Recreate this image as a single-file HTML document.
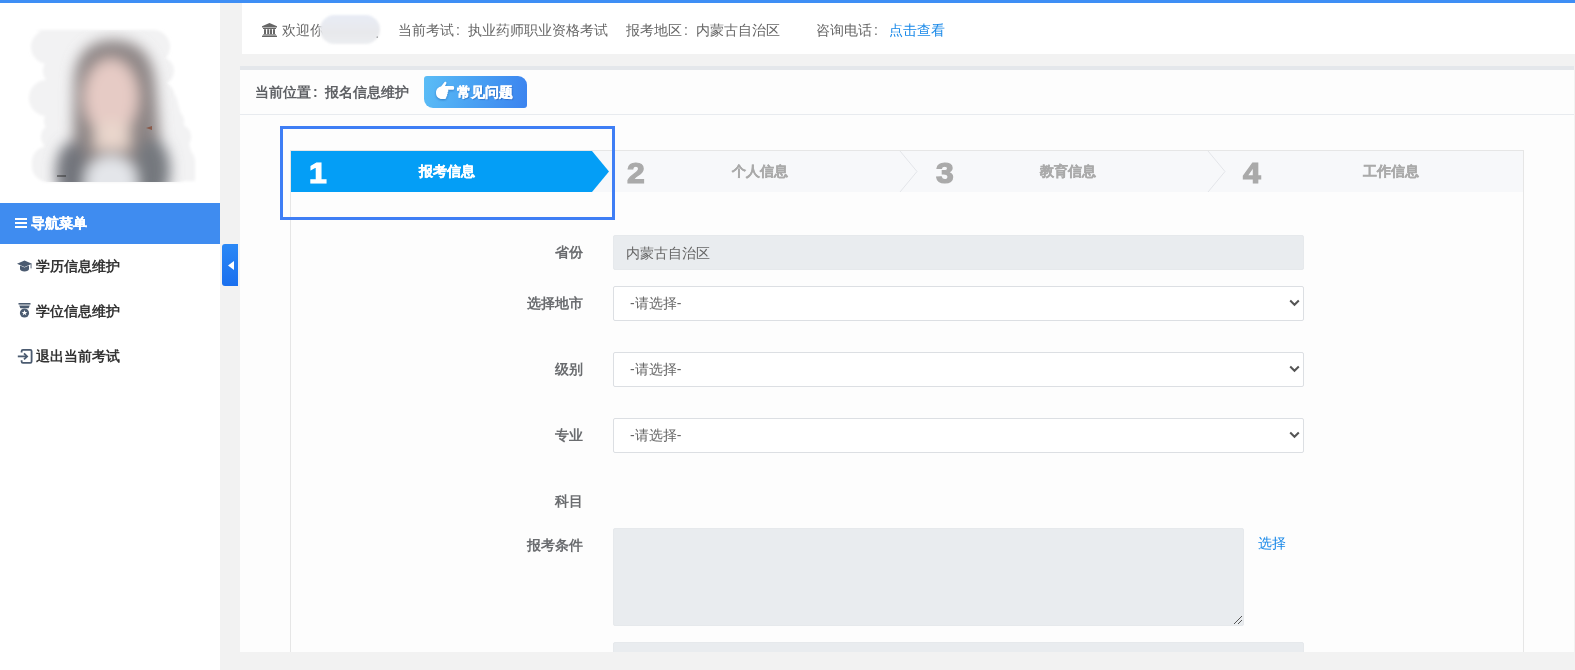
<!DOCTYPE html>
<html><head><meta charset="utf-8">
<style>
*{box-sizing:border-box;margin:0;padding:0}
html,body{width:1575px;height:670px;overflow:hidden;background:#f2f2f2;font-family:"Liberation Sans",sans-serif;font-size:14px;color:#666}
.abs{position:absolute}
#topbar{left:0;top:0;width:1575px;height:3px;background:#3e8ef5}
#side{left:0;top:3px;width:220px;height:667px;background:#fff}
#nav{left:0;top:203px;width:220px;height:41px;background:#3f8cf0;color:#fff;font-weight:bold}
.nt{position:absolute;white-space:nowrap;line-height:20px;will-change:transform}
.mi{position:absolute;will-change:transform;left:36px;color:#333;font-weight:bold;white-space:nowrap;line-height:20px}
#tab{left:222px;top:244px;width:16px;height:42px;border-radius:3px 0 0 3px;background:linear-gradient(180deg,#2a88f6,#1a6fee)}
#hdr{left:242px;top:3px;width:1333px;height:51px;background:#fff}
#panel{left:240px;top:66px;width:1334px;height:586px;background:#fdfdfd;border-top:4px solid #e4e7eb}
#crumb{left:240px;top:114px;width:1334px;height:1px;background:#e8ebef}
#outline{left:280px;top:126px;width:335px;height:94px;border:3px solid #3f7ef5}
#steps{left:290px;top:150px;width:1234px;height:520px;border:1px solid #e6e6e6;border-bottom:none}
#stepbar{left:291px;top:151px;width:1232px;height:41px;background:#f7f8fa}
.num{position:absolute;font-family:"Liberation Sans",sans-serif;font-weight:bold;font-size:29px;line-height:30px;color:#aaa;-webkit-text-stroke:1.2px currentColor;transform:scaleX(1.1);transform-origin:0 0}
.slbl{position:absolute;will-change:transform;font-weight:bold;-webkit-text-stroke:0.3px currentColor;color:#aaa;white-space:nowrap;line-height:20px}
.lbl{position:absolute;will-change:transform;font-weight:bold;color:#6a6c6f;white-space:nowrap;line-height:20px;text-align:right;width:120px;left:463px}
.inp{position:absolute;left:613px;width:691px;height:35px;border:1px solid #dcdfe3;border-radius:2px;background:#fff}
.dis{background:#e9ecef;border-color:#e6e9ec}
.cl{display:inline-block;width:14px;text-indent:2px}
.itxt{position:absolute;will-change:transform;white-space:nowrap;line-height:20px;color:#666}
</style></head><body>
<div id="topbar" class="abs"></div>
<div id="side" class="abs"></div>
<svg class="abs" style="left:0;top:0" width="220" height="200" viewBox="0 0 220 200">
  <defs>
    <filter id="bb" x="-20%" y="-20%" width="140%" height="140%"><feGaussianBlur stdDeviation="1.6"/></filter>
    <filter id="bf" x="-50%" y="-50%" width="200%" height="200%"><feGaussianBlur stdDeviation="7"/></filter>
    <filter id="bs" x="-50%" y="-50%" width="200%" height="200%"><feGaussianBlur stdDeviation="0.6"/></filter>
    <clipPath id="cp">
      <rect x="31" y="30" width="139" height="34" rx="17"/>
      <rect x="43" y="57" width="131" height="28" rx="14"/>
      <rect x="29" y="80" width="146" height="36" rx="18"/>
      <rect x="44" y="110" width="140" height="22" rx="11"/>
      <rect x="41" y="124" width="150" height="26" rx="13"/>
      <rect x="32" y="146" width="163" height="36" rx="16"/>
      <polygon points="150,92 176,96 195,166 195,181 150,181"/>
      <polygon points="35,30 121,30 163,40 120,50"/>
    </clipPath>
  </defs>
  <g filter="url(#bb)" fill="#f2f2f3">
      <rect x="31" y="30" width="139" height="34" rx="17"/>
      <rect x="43" y="57" width="131" height="28" rx="14"/>
      <rect x="29" y="80" width="146" height="36" rx="18"/>
      <rect x="44" y="110" width="140" height="22" rx="11"/>
      <rect x="41" y="124" width="150" height="26" rx="13"/>
      <rect x="32" y="146" width="163" height="36" rx="16"/>
      <polygon points="150,92 176,96 195,166 195,181 150,181"/>
      <polygon points="35,30 121,30 163,40 120,50"/>
  </g>
  <g clip-path="url(#cp)">
    <g filter="url(#bf)">
      <path d="M72,190 L74,85 C74,50 93,40 113,40 C135,40 154,50 156,88 L164,190 Z" fill="#8e8686"/>
      <ellipse cx="111" cy="97" rx="27" ry="38" fill="#e6cbc5"/>
      <rect x="95" y="122" width="34" height="28" fill="#e9d6cc"/>
      <ellipse cx="72" cy="172" rx="16" ry="30" fill="#72757c"/>
      <ellipse cx="152" cy="170" rx="18" ry="32" fill="#75787e"/>
      <ellipse cx="111" cy="180" rx="26" ry="24" fill="#e4e6ea"/>
    </g>
  </g>
  <polygon points="146,128 152,126 152,130" fill="#8a5a4a"/>
  <rect x="57" y="175" width="9" height="2" fill="#333" opacity=".5" filter="url(#bs)"/>
</svg>
<div id="nav" class="abs">
  <div class="abs" style="left:15px;top:15px;width:12px;height:2px;background:#fff"></div>
  <div class="abs" style="left:15px;top:19px;width:12px;height:2px;background:#fff"></div>
  <div class="abs" style="left:15px;top:23px;width:12px;height:2px;background:#fff"></div>
  <div class="nt" style="left:31px;top:10px;-webkit-text-stroke:0.3px #fff">导航菜单</div>
</div>
<svg class="abs" style="left:17px;top:260px" width="15" height="12" viewBox="0 0 15 12">
  <polygon points="7.5,0.5 15,3.8 7.5,7 0,3.8" fill="#4b5b70"/>
  <path d="M3 5.6 L3 9 C3 10.6 5 11.5 7.5 11.5 C10 11.5 12 10.6 12 9 L12 5.6 L7.5 7.6 Z" fill="#4b5b70"/>
  <rect x="13.6" y="4" width="0.9" height="4.4" fill="#4b5b70"/>
</svg>
<svg class="abs" style="left:18px;top:303px" width="13" height="15" viewBox="0 0 13 15">
  <rect x="0.5" y="0" width="12" height="1.6" fill="#4b5b70"/>
  <path d="M1.2 2.4 L11.8 2.4 L10.6 5.2 L2.4 5.2 Z" fill="#4b5b70"/>
  <circle cx="6.5" cy="10" r="4.6" fill="#4b5b70"/>
  <polygon points="6.5,7 7.3,9 9.3,9 7.7,10.2 8.3,12.2 6.5,11 4.7,12.2 5.3,10.2 3.7,9 5.7,9" fill="#fff"/>
</svg>
<svg class="abs" style="left:17px;top:349px" width="16" height="15" viewBox="0 0 16 15">
  <path d="M4.6 3.6 L4.6 2.2 Q4.6 0.9 5.9 0.9 L13.3 0.9 Q14.6 0.9 14.6 2.2 L14.6 12.6 Q14.6 13.9 13.3 13.9 L5.9 13.9 Q4.6 13.9 4.6 12.6 L4.6 11.2" fill="none" stroke="#4b5b70" stroke-width="1.8"/>
  <path d="M0.8 7.4 L9.8 7.4" stroke="#4b5b70" stroke-width="1.8"/>
  <path d="M7 4.4 L10.1 7.4 L7 10.4" fill="none" stroke="#4b5b70" stroke-width="1.8"/>
</svg>
<div class="mi" style="top:256px">学历信息维护</div>
<div class="mi" style="top:301px">学位信息维护</div>
<div class="mi" style="top:346px">退出当前考试</div>
<div id="tab" class="abs"><svg class="abs" style="left:6px;top:17px" width="7" height="9" viewBox="0 0 7 9"><polygon points="0,4.5 6,0 6,9" fill="#fff"/></svg></div>

<div id="hdr" class="abs">
  <svg class="abs" style="left:20px;top:20px" width="15" height="14" viewBox="0 0 15 14">
    <polygon points="7.5,0 15,3.2 15,4.6 0,4.6 0,3.2" fill="#666"/>
    <rect x="1" y="5" width="13" height="1" fill="#666"/>
    <rect x="2" y="6.2" width="2" height="5" fill="#666"/>
    <rect x="5.2" y="6.2" width="2" height="5" fill="#666"/>
    <rect x="8" y="6.2" width="2" height="5" fill="#666"/>
    <rect x="11" y="6.2" width="2" height="5" fill="#666"/>
    <rect x="1" y="11.4" width="13" height="1" fill="#666"/>
    <rect x="0" y="12.6" width="15" height="1.4" fill="#666"/>
  </svg>
  <div class="nt" style="left:40px;top:17px">欢迎你</div>
  <div class="abs" style="left:134px;top:33px;width:2px;height:2px;background:#666"></div>
  <div class="abs" style="left:78px;top:12px;width:60px;height:29px;border-radius:15px;background:linear-gradient(180deg,#e8ecf5,#e8e9ec 60%,#eceef1);filter:blur(0.8px)"></div>
  <div class="nt" style="left:156px;top:17px">当前考试<span class="cl">:</span>执业药师职业资格考试</div>
  <div class="nt" style="left:384px;top:17px">报考地区<span class="cl">:</span>内蒙古自治区</div>
  <div class="nt" style="left:574px;top:17px">咨询电话<span class="cl">:</span></div>
  <div class="nt" style="left:647px;top:17px;color:#1888e8">点击查看</div>
</div>

<div id="panel" class="abs"></div>
<div id="crumb" class="abs"></div>
<div class="nt" style="left:255px;top:82px;font-weight:bold;color:#5f6165">当前位置<span class="cl">:</span>报名信息维护</div>
<div class="abs" style="left:424px;top:76px;width:103px;height:32px;border-radius:3px 9px 3px 9px;background:linear-gradient(100deg,#5bbdf6 0%,#4aa3f3 45%,#3b83ef 100%)"></div>
<svg class="abs" style="left:435px;top:81px;overflow:visible" width="20" height="19" viewBox="0 0 20 19">
  <path d="M1 12 C1 8.2 3 6.4 6 5.6 L9.4 1.3 C10.2 0.3 11.9 1 11.4 2.3 L10 5 L18 5 C19.6 5 19.6 8.8 18 8.8 L13 8.8 C13.7 9.5 13.5 11 12.5 11.2 C13.1 11.8 12.9 13.2 12 13.4 C12.5 14.1 12.2 15.5 11.2 15.7 C11.5 16.4 11 18 10 18 L7 18 C3.5 18 1 15.5 1 12 Z" fill="#fff" style="filter:drop-shadow(0.5px 1.2px 0.8px rgba(0,50,130,.4))"/>
</svg>
<div class="nt" style="left:457px;top:82px;font-weight:bold;color:#fff;-webkit-text-stroke:0.4px #fff;text-shadow:0.5px 1px 1px rgba(0,40,120,.4)">常见问题</div>

<div id="steps" class="abs"></div>
<div id="stepbar" class="abs"></div>
<svg class="abs" style="left:291px;top:151px" width="1232" height="41">
  <polygon points="0,0 301,0 318,20.5 301,41 0,41" fill="#049ef6"/>
  <polyline points="609,0 626,20.5 609,41" fill="none" stroke="#e3e5e9" stroke-width="1"/>
  <polyline points="917,0 934,20.5 917,41" fill="none" stroke="#e3e5e9" stroke-width="1"/>
</svg>
<div class="num" style="left:309px;top:157.5px;color:#fff">1</div>
<div class="num" style="left:627px;top:157.5px">2</div>
<div class="num" style="left:936px;top:157.5px">3</div>
<div class="num" style="left:1243px;top:157.5px">4</div>
<div class="slbl" style="left:419px;top:161px;color:#fff">报考信息</div>
<div class="slbl" style="left:732px;top:161px">个人信息</div>
<div class="slbl" style="left:1040px;top:161px">教育信息</div>
<div class="slbl" style="left:1363px;top:161px">工作信息</div>
<div id="outline" class="abs"></div>

<div class="lbl" style="top:242px">省份</div>
<div class="inp dis" style="top:235px"></div>
<div class="itxt" style="left:626px;top:243px">内蒙古自治区</div>

<div class="lbl" style="top:293px">选择地市</div>
<div class="inp" style="top:286px"></div>
<div class="itxt" style="left:630px;top:293px">-请选择-</div>

<div class="lbl" style="top:359px">级别</div>
<div class="inp" style="top:352px"></div>
<div class="itxt" style="left:630px;top:359px">-请选择-</div>

<div class="lbl" style="top:425px">专业</div>
<div class="inp" style="top:418px"></div>
<div class="itxt" style="left:630px;top:425px">-请选择-</div>

<div class="lbl" style="top:491px">科目</div>

<div class="lbl" style="top:535px">报考条件</div>
<div class="inp dis" style="top:528px;width:631px;height:98px"></div>
<div class="itxt" style="left:1258px;top:533px;color:#1888e8">选择</div>

<div class="inp dis" style="top:642px;height:35px"></div>
<svg class="abs" style="left:1289px;top:299px" width="11" height="8" viewBox="0 0 11 8"><path d="M1.2 1.5 L5.5 5.8 L9.8 1.5" fill="none" stroke="#555" stroke-width="2"/></svg>
<svg class="abs" style="left:1289px;top:365px" width="11" height="8" viewBox="0 0 11 8"><path d="M1.2 1.5 L5.5 5.8 L9.8 1.5" fill="none" stroke="#555" stroke-width="2"/></svg>
<svg class="abs" style="left:1289px;top:431px" width="11" height="8" viewBox="0 0 11 8"><path d="M1.2 1.5 L5.5 5.8 L9.8 1.5" fill="none" stroke="#555" stroke-width="2"/></svg>
<svg class="abs" style="left:1233px;top:615px" width="10" height="10" viewBox="0 0 10 10"><path d="M1 9 L9 1 M5 9 L9 5" stroke="#555" stroke-width="1"/></svg>

<div class="abs" style="left:240px;top:652px;width:1335px;height:18px;background:#f2f2f2"></div>
<div class="abs" style="left:220px;top:652px;width:20px;height:18px;background:#f2f2f2"></div>
</body></html>
